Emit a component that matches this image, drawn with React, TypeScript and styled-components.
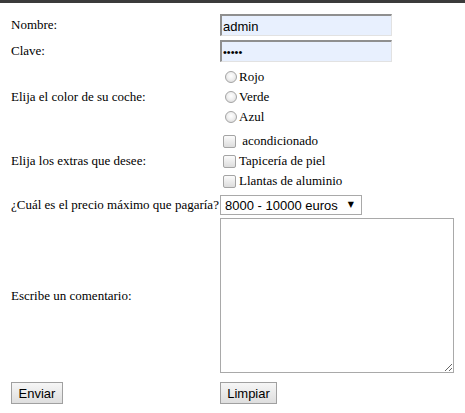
import React from "react";
import styled, { createGlobalStyle } from "styled-components";

const Global = createGlobalStyle`
  html, body { margin: 0; padding: 0; background: #fff; }
  body { font-family: "Liberation Serif", "Times New Roman", serif; font-size: 13px; color: #000; }
`;

const TopBar = styled.div`
  height: 3px;
  background: #3b3b3b;
`;

const Form = styled.form`
  display: flex;
  flex-direction: column;
  padding: 11px 0 0 11px;
`;

const Row = styled.div<{ $gap: number }>`
  display: grid;
  grid-template-columns: 209px auto;
  align-items: center;
  margin-top: ${(p) => p.$gap}px;
`;

const Label = styled.label`
  font-size: 13px;
  line-height: 16px;
`;

const TextInput = styled.input`
  box-sizing: border-box;
  width: 172px;
  height: 22px;
  margin: 0;
  padding: 1px 2px 0 1px;
  border-style: solid;
  border-width: 2px 1px 1px 2px;
  border-color: #8f8f8f #e2e2e2 #e2e2e2 #8f8f8f;
  background: #e8f0fe;
  font-family: "Liberation Sans", Arial, sans-serif;
  font-size: 13px;
  color: #000;
  outline: none;
  &[type="password"] { font-size: 11px; letter-spacing: 0; }
`;

const Group = styled.div`
  display: flex;
  flex-direction: column;
`;

const OptionLine = styled.label`
  display: flex;
  align-items: center;
  height: 20px;
  font-size: 13px;
`;

const Radio = styled.input`
  appearance: none;
  box-sizing: border-box;
  width: 12px;
  height: 12px;
  margin: 0 2px 0 5px;
  border-radius: 50%;
  border: 1px solid #a4a4a4;
  background: radial-gradient(circle at 50% 40%, #ffffff 0%, #f0f0f0 45%, #d4d4d4 100%);
`;

const Check = styled.input`
  appearance: none;
  box-sizing: border-box;
  width: 13px;
  height: 13px;
  margin: 0 3px 0 3px;
  border-radius: 2px;
  border: 1px solid #a4a4a4;
  background: linear-gradient(#fbfbfb, #dcdcdc);
`;

const SelectWrap = styled.div`
  position: relative;
  width: 142px;
  height: 20px;
`;

const Select = styled.select`
  appearance: none;
  box-sizing: border-box;
  width: 142px;
  height: 20px;
  margin: 0;
  padding: 0 0 0 4px;
  border: 1px solid #a9a9a9;
  border-radius: 0;
  background: #fff;
  font-family: "Liberation Sans", Arial, sans-serif;
  font-size: 13px;
  color: #000;
  outline: none;
`;

const Arrow = styled.span`
  position: absolute;
  right: 8px;
  top: 3px;
  font-family: "DejaVu Sans", sans-serif;
  font-size: 8px;
  line-height: 14px;
  pointer-events: none;
`;

const TextArea = styled.textarea`
  box-sizing: border-box;
  width: 234px;
  height: 155px;
  margin: 0;
  border: 1px solid #a9a9a9;
  outline: none;
  resize: both;
`;

const Button = styled.button<{ $w: number }>`
  box-sizing: border-box;
  width: ${(p) => p.$w}px;
  height: 22px;
  margin: 0;
  padding: 0;
  border: 1px solid #a0a0a0;
  border-radius: 0;
  background: linear-gradient(#f6f6f6, #dedede);
  font-family: "Liberation Sans", Arial, sans-serif;
  font-size: 13px;
  color: #000;
`;

const ButtonCell = styled.div`
  display: flex;
`;

export default function App() {
  return (
    <>
      <Global />
      <TopBar />
      <Form onSubmit={(e) => e.preventDefault()}>
        <Row $gap={0}>
          <Label>Nombre:</Label>
          <TextInput type="text" defaultValue="admin" />
        </Row>
        <Row $gap={4}>
          <Label>Clave:</Label>
          <TextInput type="password" defaultValue="admin" />
        </Row>
        <Row $gap={5}>
          <Label>Elija el color de su coche:</Label>
          <Group>
            <OptionLine><Radio type="radio" name="color" />Rojo</OptionLine>
            <OptionLine><Radio type="radio" name="color" />Verde</OptionLine>
            <OptionLine><Radio type="radio" name="color" />Azul</OptionLine>
          </Group>
        </Row>
        <Row $gap={4}>
          <Label>Elija los extras que desee:</Label>
          <Group>
            <OptionLine><Check type="checkbox" />&nbsp;acondicionado</OptionLine>
            <OptionLine><Check type="checkbox" />Tapicería de piel</OptionLine>
            <OptionLine><Check type="checkbox" />Llantas de aluminio</OptionLine>
          </Group>
        </Row>
        <Row $gap={4}>
          <Label>¿Cuál es el precio máximo que pagaría?</Label>
          <SelectWrap>
            <Select defaultValue="b">
              <option value="a">Menos de 8000 euros</option>
              <option value="b">8000 - 10000 euros</option>
              <option value="c">Más de 10000 euros</option>
            </Select>
            <Arrow>▼</Arrow>
          </SelectWrap>
        </Row>
        <Row $gap={3}>
          <Label>Escribe un comentario:</Label>
          <TextArea />
        </Row>
        <Row $gap={9}>
          <ButtonCell><Button $w={52} type="submit">Enviar</Button></ButtonCell>
          <ButtonCell><Button $w={57} type="reset">Limpiar</Button></ButtonCell>
        </Row>
      </Form>
    </>
  );
}
